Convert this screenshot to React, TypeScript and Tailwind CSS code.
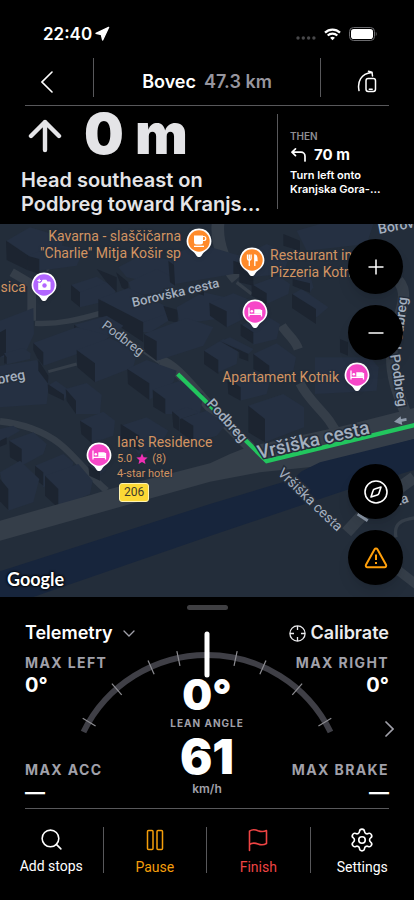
import React from 'react';
import { Navigation, Search, Settings } from 'lucide-react';

interface Building {
  roof: string;
  wall: string;
}

// Terrain is drawn on a 1242 x 1119 grid
const BUILDINGS: Building[] = [
  { roof: '20,50 90,10 190,40 180,110 85,95', wall: '18,50 85,95 82,138 20,108' },
  { roof: '85,95 170,60 250,80 230,125 118,140', wall: '82,95 118,105 118,150 82,138' },
  { roof: '213,183 290,158 350,195 320,235 240,205', wall: '213,183 240,205 240,250 213,228' },
  { roof: '240,205 320,175 345,200 345,225 240,250', wall: '290,135 350,160 350,205 320,175' },
  { roof: '355,130 430,90 520,110 510,185 380,160', wall: '348,145 385,175 385,205 365,190' },
  { roof: '385,175 470,135 530,165 520,200 400,215', wall: '505,110 525,125 525,185 510,175' },
  { roof: '520,90 600,60 720,95 700,150 525,180', wall: '700,110 730,120 730,150 700,150' },
  { roof: '295,225 385,192 505,250 505,275 430,295', wall: '295,225 430,295 430,355 325,285 295,278' },
  { roof: '430,295 505,268 505,290 450,325 430,325', wall: '490,245 533,258 533,296 505,290' },
  { roof: '530,250 610,205 700,225 690,280 540,300', wall: '582,180 612,190 612,215 585,205' },
  { roof: '432,330 560,282 640,310 610,365 470,410', wall: '432,330 470,352 470,410 432,382' },
  { roof: '225,302 320,275 370,305 340,335 260,330', wall: '222,302 240,316 234,320 222,315' },
  { roof: '100,357 230,310 330,335 290,370 130,425', wall: '100,357 130,385 130,425 112,402 100,378' },
  { roof: '230,378 330,342 412,380 400,430 285,475', wall: '230,378 285,418 285,475 232,430' },
  { roof: '382,435 440,408 530,440 520,475 448,528', wall: '382,435 448,478 448,528 384,480' },
  { roof: '458,497 540,470 610,510 600,570 496,570', wall: '458,497 496,525 496,570 460,548' },
  { roof: '0,290 100,252 102,330 70,400 0,400', wall: '0,325 18,315 18,390 0,400' },
  { roof: '12,388 70,372 92,388 90,405 15,422', wall: '12,388 20,400 20,420 12,418' },
  { roof: '0,425 110,408 148,470 140,540 0,550', wall: '115,408 145,455 145,480 115,440' },
  { roof: '143,485 168,470 210,500 190,530', wall: '143,480 192,512 192,530 145,508' },
  { roof: '197,495 260,477 305,512 300,570 228,570', wall: '197,495 228,530 228,570 200,530' },
  { roof: '720,100 800,60 870,90 850,150 740,160', wall: '718,130 760,160 760,185 718,175' },
  { roof: '755,185 835,155 870,180 865,210 800,240', wall: '755,180 800,208 800,240 755,215' },
  { roof: '628,236 700,208 780,240 740,280 680,310', wall: '628,236 680,262 680,310 630,275' },
  { roof: '722,305 790,270 840,300 830,345 760,362', wall: '722,300 760,325 760,360 722,335' },
  { roof: '878,210 905,195 985,250 950,280', wall: '876,210 948,255 948,300 876,252' },
  { roof: '880,165 930,150 940,190 930,205', wall: '878,165 930,178 930,206 878,185' },
  { roof: '612,380 670,345 715,375 710,420 655,445', wall: '612,380 655,408 655,450 612,420' },
  { roof: '665,350 690,340 760,375 745,390', wall: '658,350 745,390 745,412 718,402 718,385' },
  { roof: '760,390 830,358 888,400 880,440 808,460', wall: '760,390 808,425 808,460 760,435' },
  { roof: '690,470 760,440 810,470 800,510 720,530', wall: '682,462 722,490 722,530 685,510' },
  { roof: '945,400 1110,400 1136,430 1130,500 945,510', wall: '1020,345 1044,355 1044,395 1020,385' },
  { roof: '890,20 960,0 1120,0 1100,60 920,80', wall: '850,30 900,50 900,80 850,65' },
  { roof: '240,590 310,563 345,590 340,635 275,658', wall: '240,590 275,612 275,658 244,630' },
  { roof: '362,605 440,580 505,620 480,665 415,690', wall: '362,600 418,635 418,680 362,650' },
  { roof: '540,585 620,560 680,600 650,635 580,655', wall: '540,580 580,605 580,655 540,625' },
  { roof: '518,565 560,550 600,565 540,585', wall: '516,562 538,580 538,622 520,610' },
  { roof: '28,650 100,625 140,660 130,690 65,725', wall: '28,650 65,675 65,720 30,700' },
  { roof: '105,725 190,690 220,715 215,745 130,790', wall: '105,725 130,745 130,785 105,765' },
  { roof: '135,755 235,720 278,770 270,810 175,852', wall: '135,755 175,795 175,852 135,815' },
  { roof: '0,745 60,710 118,765 100,835 25,860', wall: '0,765 25,795 25,858 0,832' },
  { roof: '0,615 40,605 60,620 0,655', wall: '0,650 20,640 20,660 0,668' },
  { roof: '268,725 300,715 320,735 300,750', wall: '265,725 300,745 300,770 268,755' },
];

const ROADS = [
  { d: 'M35 145 L95 180 L95 290', w: 26 },
  { d: 'M105 298 C180 302 240 285 300 268', w: 16 },
  { d: 'M140 140 L180 95', w: 8 },
  { d: 'M145 443 L230 420', w: 9 },
  { d: 'M400 360 L480 415', w: 12 },
  { d: 'M480 410 C520 420 560 470 640 560 L780 700', w: 32 },
  { d: 'M0 592 C60 598 130 620 180 660 C230 700 270 760 320 800', w: 20 },
  { d: 'M655 -10 C645 60 680 130 710 165', w: 38 },
  { d: 'M710 175 L755 210', w: 10 },
  { d: 'M845 305 C860 330 885 345 895 375', w: 28 },
  { d: 'M900 478 C930 540 990 570 1015 640', w: 28 },
  { d: 'M1195 170 C1240 220 1175 300 1175 400 C1175 480 1205 530 1225 590', w: 34 },
  { d: 'M1040 925 L1090 870 L1242 760', w: 36 },
  { d: 'M1188 940 C1180 900 1200 885 1260 880', w: 10 },
  { d: 'M1170 1020 L1260 1090', w: 28 },
];

const GAUGE_TICKS = [-59, -41, -24, -12, 12, 24, 41, 59];

const Terrain: React.FC = () => (
  <svg
    className="absolute inset-0 h-full w-full"
    viewBox="0 0 1242 1119"
    preserveAspectRatio="xMidYMid slice"
    aria-hidden="true"
  >
    <rect width="1242" height="1119" fill="#232d3a" />
    {ROADS.map((road) => (
      <path key={road.d} d={road.d} stroke="#353e49" strokeWidth={road.w} fill="none" strokeLinejoin="round" />
    ))}
    {BUILDINGS.map((b) => (
      <g key={b.roof}>
        <polygon points={b.roof} fill="#253042" />
        <polygon points={b.wall} fill="#1c2430" />
      </g>
    ))}
    {/* Main road and river */}
    <path d="M0 890 L275 812 L330 795 L630 718 L690 690 L745 668 L1020 608 L1242 552 L1242 645 L940 728 L780 745 L630 773 L0 950Z" fill="#353e49" />
    <path d="M0 1042 L630 840 L880 765 L905 742 L960 715 L1242 645 L1242 738 L1040 798 L630 936 L100 1119 L0 1119Z" fill="#17253c" />
    {/* Corner house standing in front of the road */}
    <polygon points="745,545 850,510 912,550 912,610 795,655" fill="#253042" />
    <polygon points="745,545 795,585 795,655 745,625" fill="#1c2430" />
    {/* Active route */}
    <path d="M533 450 L800 711 L1250 602" fill="none" stroke="#22c55e" strokeWidth="13" />
    <path d="M1182 593 L1202 577 L1203 585 L1219 582 L1220 590 L1205 593 L1207 603Z" fill="#8c98a8" />
    <path d="M1073 870 l30 20" stroke="#8c98a8" strokeWidth="9" />
  </svg>
);

const StreetLabels: React.FC = () => (
  <svg
    className="absolute inset-0 h-full w-full font-['Roboto',sans-serif]"
    viewBox="0 0 414 373"
    preserveAspectRatio="xMidYMid slice"
    fill="#a3afbf"
    stroke="#242d3a"
    strokeWidth="3"
    paintOrder="stroke"
  >
    <text transform="translate(133 83) rotate(-13)" fontSize="13" fontWeight="500">Borovška cesta</text>
    <text transform="translate(101 103) rotate(37)" fontSize="13">Podbreg</text>
    <text transform="translate(-26 165) rotate(-11)" fontSize="14" fontWeight="500">Podbreg</text>
    <text transform="translate(206 180) rotate(48)" fontSize="14" fontWeight="500">Podbreg</text>
    <text transform="translate(259 235) rotate(-13)" fontSize="19" fontWeight="500">Vršiška cesta</text>
    <text transform="translate(277 250) rotate(44)" fontSize="14">Vršiška cesta</text>
    <text transform="translate(390 131) rotate(81)" fontSize="14" fontWeight="500">Podbreg</text>
    <text transform="translate(401 126) rotate(-83)" fontSize="14" fontWeight="500">Podbreg</text>
    <text transform="translate(379 10) rotate(-11)" fontSize="14" fontWeight="500">Borovška</text>
    <text transform="translate(377 289) rotate(-19)" fontSize="14" fontWeight="500">cesta</text>
  </svg>
);

type PinKind = 'cafe' | 'food' | 'photo' | 'hotel';

const PIN_COLORS: Record<PinKind, string> = {
  cafe: '#ff8a2a',
  food: '#ff8a2a',
  photo: '#b266ff',
  hotel: '#f747c8',
};

const Pin: React.FC<{ kind: PinKind }> = ({ kind }) => (
  <svg viewBox="0 0 26 30" className="h-[30px] w-[26px] shrink-0 drop-shadow" aria-hidden="true">
    <path d="M13 .5a12.300 12.300 0 0 1 8 21.600c-3 2.200-4.300 3.500-5.500 5.600-1 1.700-4 1.700-5 0-1.200-2.100-2.500-3.400-5.500-5.600A12.300 12.300 0 0 1 13 .5z" fill="#fff" />
    <circle cx="13" cy="13" r="10.700" fill={PIN_COLORS[kind]} />
    {kind === 'cafe' && (
      <g fill="#fff">
        <path d="M8 7.500h9v6.500a2.500 2.500 0 0 1-2.500 2.500h-4A2.500 2.500 0 0 1 8 14z" />
        <path d="M16.500 8.500h1.300a1.700 1.700 0 0 1 0 4h-1.300" fill="none" stroke="#fff" strokeWidth="1.200" />
        <path d="M8 17.700h10v1.300H8z" />
      </g>
    )}
    {kind === 'food' && (
      <g fill="none" stroke="#fff" strokeWidth="1.300">
        <path d="M8.500 7.500v4a1.800 1.800 0 0 0 3.600 0v-4M10.300 7.500V19" />
        <path d="M15.800 19V8c2 0 2.200 2 2.200 5.500h-2.200" fill="#fff" />
      </g>
    )}
    {kind === 'photo' && (
      <g>
        <path d="M8 9.500h2.500l1.200-1.700h3.600l1.200 1.700h2.200a.8.8 0 0 1 .8.800v7a.8.8 0 0 1-.8.800H8a.8.800 0 0 1-.8-.8v-7A.8.800 0 0 1 8 9.500z" fill="#fff" />
        <circle cx="13.500" cy="13.500" r="2.200" fill="#b266ff" />
        <path d="M8.500 6v5M6 8.500h5" stroke="#b266ff" strokeWidth="2.500" />
        <path d="M8.200 6.700v3.600M6.400 8.500H10" stroke="#fff" strokeWidth="1.100" />
      </g>
    )}
    {kind === 'hotel' && (
      <g fill="none" stroke="#fff" strokeWidth="1.300">
        <path d="M7 8.500V17.500M7 15.300h12.500M19.500 17.500V11" />
        <circle cx="9.800" cy="12.300" r="1.300" fill="#fff" stroke="none" />
        <path d="M12.300 10.300h5.700a1.500 1.500 0 0 1 1.500 1.500v3h-7.200z" fill="#fff" stroke="none" />
      </g>
    )}
  </svg>
);

const MapButton: React.FC<{ label: string; children: React.ReactNode }> = ({ label, children }) => (
  <button
    aria-label={label}
    className="flex h-[55px] w-[55px] items-center justify-center rounded-full bg-black text-white shadow-lg"
  >
    {children}
  </button>
);

const MapView: React.FC = () => (
  <section className="relative min-h-[373px] flex-1 overflow-hidden bg-[#232d3a]" aria-label="Map">
    <Terrain />
    <StreetLabels />

    {/* Places */}
    <div className="font-['Roboto',sans-serif] text-sm leading-[17px] text-[#d29462] [text-shadow:0_0_2px_#232d3a]">
      <div className="absolute top-[4px] right-[202px] flex items-start gap-[5px] text-right">
        <p className="whitespace-nowrap">Kavarna - slaščičarna<br />"Charlie" Mitja Košir sp</p>
        <Pin kind="cafe" />
      </div>
      <div className="absolute top-[48px] right-[357px] flex items-center gap-[5px]">
        <p className="whitespace-nowrap">Klasica</p>
        <Pin kind="photo" />
      </div>
      <div className="absolute top-[23px] left-[239px] flex items-start gap-[5px]">
        <Pin kind="food" />
        <p className="whitespace-nowrap">Restaurant in<br />Pizzeria Kotnik</p>
      </div>
      <div className="absolute top-[75px] left-[242px]">
        <Pin kind="hotel" />
      </div>
      <div className="absolute top-[138px] right-[44px] flex items-center gap-[5px]">
        <p className="whitespace-nowrap">Apartament Kotnik</p>
        <Pin kind="hotel" />
      </div>
      <div className="absolute top-[210px] left-[86px] flex items-start gap-[5px]">
        <div className="pt-2"><Pin kind="hotel" /></div>
        <div>
          <p className="whitespace-nowrap">Ian's Residence</p>
          <p className="flex items-center text-[11px] leading-[15px]">
            5.0
            <svg viewBox="0 0 12 12" className="mx-1 h-3 w-3" fill="#f02fb4" aria-hidden="true">
              <path d="M6 .5l1.600 3.700 4 .4-3 2.600.9 3.900L6 9 2.500 11.100l.9-3.900-3-2.600 4-.4z" />
            </svg>
            (8)
          </p>
          <p className="text-[11px] leading-[15px]">4-star hotel</p>
        </div>
      </div>
      <span className="absolute top-[259px] left-[119px] rounded-[3px] border border-[#fff3b0] bg-[#fcd835] px-1 text-xs leading-[17px] text-[#3c3a2c] [text-shadow:none]">
        206
      </span>
    </div>

    <span className="absolute bottom-[6px] left-[7px] font-['Lato',sans-serif] text-lg leading-6 font-bold text-white [text-shadow:0_0_2px_#000,0_0_2px_#000,0_0_3px_#000]">
      Google
    </span>

    <div className="absolute inset-y-0 right-[11px] flex flex-col justify-between pt-[15px] pb-[12px]">
      <div className="flex flex-col gap-[11px]">
        <MapButton label="Zoom in">
          <svg viewBox="0 0 16 16" className="h-4 w-4" stroke="currentColor" strokeWidth="1.500"><path d="M8 .5v15M.5 8h15" /></svg>
        </MapButton>
        <MapButton label="Zoom out">
          <svg viewBox="0 0 16 16" className="h-4 w-4" stroke="currentColor" strokeWidth="1.500"><path d="M.5 8h15" /></svg>
        </MapButton>
      </div>
      <div className="flex flex-col gap-[11px]">
        <MapButton label="Recenter">
          <svg viewBox="0 0 24 24" className="h-6 w-6" fill="none" stroke="currentColor" strokeWidth="1.600" strokeLinejoin="round">
            <circle cx="12" cy="12" r="11" />
            <path d="M17 7l-2 6.300a2.500 2.500 0 0 1-1.700 1.700L7 17l2-6.300A2.500 2.500 0 0 1 10.700 9z" />
          </svg>
        </MapButton>
        <MapButton label="Report a hazard">
          <svg viewBox="0 0 24 24" className="h-6 w-6" fill="none" stroke="#ff9f0a" strokeWidth="2" strokeLinejoin="round">
            <path d="M10.600 3.300L2 18.800c-.6 1.100.1 2.400 1.400 2.400h17.200c1.300 0 2-1.300 1.400-2.400L13.400 3.300c-.6-1.100-2.200-1.100-2.800 0z" />
            <path d="M12 8.500v5.500M12 16v2" />
          </svg>
        </MapButton>
      </div>
    </div>
  </section>
);

const StatusBar: React.FC = () => (
  <div className="flex h-14 items-center justify-between pt-3 pr-[37px] pl-[43px]">
    <div className="flex items-center gap-0.5">
      <span className="text-[17px] leading-6 font-semibold">22:40</span>
      <Navigation className="h-4 w-4" fill="currentColor" />
    </div>
    <div className="flex items-center gap-2">
      <svg viewBox="0 0 20 12" className="h-3 w-5" fill="#48484a" aria-hidden="true">
        <circle cx="2" cy="10" r="1.700" />
        <circle cx="7.300" cy="10" r="1.700" />
        <circle cx="12.600" cy="10" r="1.700" />
        <circle cx="17.900" cy="10" r="1.700" />
      </svg>
      <svg viewBox="0 0 17 13" className="h-[13px] w-[17px]" fill="none" stroke="currentColor" strokeWidth="2.200" aria-hidden="true">
        <path d="M1 4.600a10.700 10.700 0 0 1 15 0M3.700 7.500a6.900 6.900 0 0 1 9.600 0" />
        <path d="M8.500 12.300l-2.400-2.500a3.500 3.500 0 0 1 4.800 0z" fill="currentColor" stroke="none" />
      </svg>
      <svg viewBox="0 0 28 14" className="h-[14px] w-7" aria-hidden="true">
        <rect x=".5" y=".5" width="25" height="13" rx="4" fill="none" stroke="#6b6b6e" />
        <rect x="2" y="2" width="22" height="10" rx="2.800" fill="#fff" />
        <path d="M26.800 5v4c1-.4 1.200-3.600 0-4z" fill="#6b6b6e" />
      </svg>
    </div>
  </div>
);

const Header: React.FC = () => (
  <header>
    <StatusBar />
    <div className="mx-[25px] flex items-stretch border-b border-[#58585b] pt-0.5 pb-2">
      <button aria-label="Back" className="flex h-[39px] w-[69px] items-center justify-center border-r border-[#58585b] pt-2 pr-6">
        <svg viewBox="0 0 12 22" className="h-[22px] w-3" fill="none" stroke="currentColor" strokeWidth="1.600" strokeLinecap="round">
          <path d="M11 1L1 11l10 10" />
        </svg>
      </button>
      <h1 className="flex flex-1 items-center justify-center gap-2 pt-2 text-lg leading-6 font-semibold">
        Bovec <span className="text-[#97969f]">47.3 km</span>
      </h1>
      <button aria-label="Phone orientation" className="flex h-[39px] w-[69px] items-center justify-center border-l border-[#58585b] pt-2 pl-6">
        <svg viewBox="0 0 20 23" className="h-[23px] w-5" fill="none" stroke="currentColor" strokeWidth="1.500" strokeLinecap="round" strokeLinejoin="round">
          <rect x="9" y="8.500" width="9.500" height="13" rx="2.200" />
          <path d="M12.300 19.300h2.900" />
          <path d="M2 20.500C.2 12 4 3.500 14.500 2.400M11.500 1.200l3.500 1 .5 3.800" />
        </svg>
      </button>
    </div>
  </header>
);

const Directions: React.FC = () => (
  <section className="flex items-stretch pb-2">
    <div className="min-w-0 flex-1 pl-[21px] text-[#e4e4e7]">
      <div className="flex items-center gap-[22px] pl-[7px]">
        <svg viewBox="0 0 34 34" className="mt-1 h-[34px] w-[34px]" fill="none" stroke="currentColor" strokeWidth="4.400" strokeLinecap="round" strokeLinejoin="round" aria-hidden="true">
          <path d="M17 31V3M3 17L17 3l14 14" />
        </svg>
        <p className="text-[56px] leading-[56px] font-black">0 m</p>
      </div>
      <p className="mt-1.5 line-clamp-2 text-xl leading-6 font-semibold">
        Head southeast on<br />Podbreg toward Kranjs…
      </p>
    </div>
    <div className="mt-2 mb-[7px] w-[137px] border-l border-[#58585b] pt-[16px] pl-[12px]">
      <p className="text-[10px] leading-3 font-semibold text-[#8e8e93]">THEN</p>
      <p className="mt-1 flex items-center gap-2 text-[15px] leading-[18px] font-bold">
        <svg viewBox="0 0 16 16" className="h-4 w-4" fill="none" stroke="currentColor" strokeWidth="1.700" strokeLinecap="round" strokeLinejoin="round" aria-hidden="true">
          <path d="M5.500 1.800L2 5.200l3.500 3.500M2 5.200h9a4 4 0 0 1 4 4V14" />
        </svg>
        70 m
      </p>
      <p className="mt-1 text-[11px] leading-[14px] font-semibold">
        Turn left onto<br />Kranjska Gora-…
      </p>
    </div>
  </section>
);

const Metric: React.FC<{ label: string; value: string }> = ({ label, value }) => (
  <div>
    <p className="text-sm leading-5 font-bold tracking-widest text-[#a1a1aa]">{label}</p>
    <p className="text-xl leading-6 font-bold">{value}</p>
  </div>
);

const Gauge: React.FC = () => (
  <svg
    viewBox="0 0 260 110"
    className="absolute top-[10px] left-1/2 h-[110px] w-[260px] -translate-x-1/2"
    fill="none"
    aria-hidden="true"
  >
    <path d="M6.500 101A137.500 137.500 0 0 1 253.500 101" stroke="#3f3f46" strokeWidth="6" />
    {GAUGE_TICKS.map((deg) => (
      <path key={deg} d="M130 17v15" stroke="#8e8e93" strokeWidth="1.200" transform={`rotate(${deg} 130 162)`} />
    ))}
    <path d="M130 3v41" stroke="#fff" strokeWidth="5" strokeLinecap="round" />
  </svg>
);

const Telemetry: React.FC = () => (
  <section className="relative mx-[25px] border-b border-[#58585b] pb-1">
    <Gauge />
    <div className="relative flex items-center justify-between text-lg leading-6 font-semibold">
      <button className="flex items-center gap-2.5">
        Telemetry
        <svg viewBox="0 0 12 7" className="h-[7px] w-3" fill="none" stroke="#a1a1aa" strokeWidth="1.300" strokeLinecap="round">
          <path d="M1 1l5 5 5-5" />
        </svg>
      </button>
      <button className="flex items-center gap-[5px] text-[#ececee]">
        <svg viewBox="0 0 17 17" className="h-[17px] w-[17px]" fill="none" stroke="currentColor" strokeWidth="1.300">
          <circle cx="8.500" cy="8.500" r="7.600" />
          <path d="M8.500 1v4M8.500 12v4M1 8.500h4M12 8.500h4" />
        </svg>
        Calibrate
      </button>
    </div>

    <div className="relative grid grid-cols-[1fr_auto_1fr]">
      <div className="flex flex-col justify-between pt-2">
        <Metric label="MAX LEFT" value="0°" />
        <Metric label="MAX ACC" value="—" />
      </div>
      <div className="pt-7 pb-[7px] text-center">
        <p className="text-[42px] leading-[44px] font-black">0°</p>
        <p className="text-[10px] leading-3 font-bold tracking-widest text-[#a1a1aa]">LEAN ANGLE</p>
        <p className="mt-1 text-5xl leading-[48px] font-black">61</p>
        <p className="text-xs leading-4 font-semibold text-[#a1a1aa]">km/h</p>
      </div>
      <div className="flex flex-col justify-between pt-2 text-right">
        <Metric label="MAX RIGHT" value="0°" />
        <Metric label="MAX BRAKE" value="—" />
      </div>
    </div>

    <button aria-label="Next page" className="absolute top-[96px] -right-[9px] p-1">
      <svg viewBox="0 0 9 16" className="h-4 w-[9px]" fill="none" stroke="#a1a1aa" strokeWidth="1.700" strokeLinecap="round">
        <path d="M1 1l7 7-7 7" />
      </svg>
    </button>
  </section>
);

const ACTIONS = [
  {
    label: 'Add stops',
    color: 'text-white',
    icon: <Search className="h-[25px] w-[25px]" strokeWidth={1.5} />,
  },
  {
    label: 'Pause',
    color: 'text-[#f59e0b]',
    icon: (
      <svg viewBox="0 0 26 26" className="h-[26px] w-[26px]" fill="none" stroke="currentColor" strokeWidth="1.500">
        <rect x="5.500" y="3.500" width="5.500" height="19" rx="1" />
        <rect x="15" y="3.500" width="5.500" height="19" rx="1" />
      </svg>
    ),
  },
  {
    label: 'Finish',
    color: 'text-[#ef4444]',
    icon: (
      <svg viewBox="0 0 26 26" className="h-[26px] w-[26px]" fill="none" stroke="currentColor" strokeWidth="1.600" strokeLinecap="round" strokeLinejoin="round">
        <path d="M4.500 23.500V4.200c2.500-2 5.500-1.800 8.500-.5 3 1.200 5.500 1.300 8.500-.2V16.500c-3 1.700-5.500 1.700-8.500.5-3-1.200-6-1.300-8.500.5" />
      </svg>
    ),
  },
  {
    label: 'Settings',
    color: 'text-white',
    icon: <Settings className="h-[26px] w-[26px]" strokeWidth={1.5} />,
  },
];

const ActionBar: React.FC = () => (
  <nav className="grid grid-cols-4 divide-x divide-[#58585b] pt-[18px] pb-[27px]">
    {ACTIONS.map((action) => (
      <button
        key={action.label}
        className={`flex h-[46px] flex-col items-center font-['Roboto',sans-serif] text-sm leading-5 ${action.color}`}
      >
        <span className="flex h-[26px] items-center">{action.icon}</span>
        <span className="mt-1">{action.label}</span>
      </button>
    ))}
  </nav>
);

const App: React.FC = () => {
  return (
    <main className="flex min-h-screen flex-col bg-black font-['Inter',sans-serif] text-white">
      <Header />
      <Directions />
      <MapView />
      <div className="pt-2">
        <div className="mx-auto mb-[11px] h-[5px] w-[41px] rounded-full bg-[#3f3f42]" />
        <Telemetry />
        <ActionBar />
      </div>
    </main>
  );
};

export default App;
